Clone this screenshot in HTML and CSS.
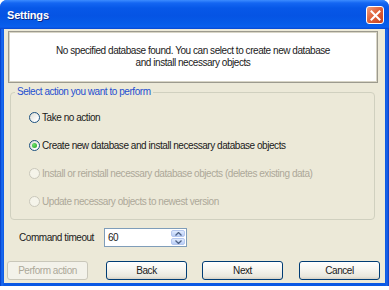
FILE: index.html
```html
<!DOCTYPE html>
<html>
<head>
<meta charset="utf-8">
<link rel="stylesheet" href="styles.css">
</head>
<body>
<div class="window">
  <div class="titlebar">
    <span class="title">Settings</span>
    <span class="close"><svg width="11" height="11" viewBox="0 0 11 11"><path d="M1.5 1.5 L9.5 9.5 M9.5 1.5 L1.5 9.5" stroke="#fff" stroke-width="2" stroke-linecap="square"/></svg></span>
  </div>
  <div class="client">
    <div class="info">
      <p>No specified database found. You can select to create new database<br>and install necessary objects</p>
    </div>
    <fieldset class="group">
      <legend>Select action you want to perform</legend>
      <div class="opt"><span class="radio"></span><span>Take no action</span></div>
      <div class="opt"><span class="radio checked"></span><span>Create new database and install necessary database objects</span></div>
      <div class="opt disabled"><span class="radio"></span><span>Install or reinstall necessary database objects (deletes existing data)</span></div>
      <div class="opt disabled"><span class="radio"></span><span>Update necessary objects to newest version</span></div>
    </fieldset>
    <div class="timeout">
      <span class="tlabel">Command timeout</span>
      <div class="spin">
        <span class="val">60</span>
        <div class="arrows">
          <span class="arr"><svg width="7" height="4" viewBox="0 0 7 4"><path d="M0.5 3.5 L3.5 0.5 L6.5 3.5" fill="none" stroke="#4d6185" stroke-width="1.3"/></svg></span>
          <span class="arr"><svg width="7" height="4" viewBox="0 0 7 4"><path d="M0.5 0.5 L3.5 3.5 L6.5 0.5" fill="none" stroke="#4d6185" stroke-width="1.3"/></svg></span>
        </div>
      </div>
    </div>
    <div class="buttons">
      <span class="btn disabled b1">Perform action</span>
      <span class="btn b2">Back</span>
      <span class="btn b3">Next</span>
      <span class="btn b4">Cancel</span>
    </div>
  </div>
</div>
<div class="under"></div>
</body>
</html>
```
FILE: styles.css
```css
html, body { margin: 0; padding: 0; background: #fff; }
body { width: 389px; height: 290px; overflow: hidden; font-family: "Liberation Sans", Arial, sans-serif; font-size: 10px; letter-spacing: -0.45px; color: #1a1a1a; }
.window {
  width: 389px; height: 286px; box-sizing: border-box;
  background: linear-gradient(90deg, #0831b8 0, #0a5ae6 1px, #1e6cf0 2px, #0a58e4 4px, #0a58e4 385px, #1a64ea 387px, #0a3cc4 389px);
  border-radius: 7px 7px 0 0;
  display: flex; flex-direction: column;
  padding: 0 4px 3px 4px;
}
.titlebar {
  height: 29px; margin: 0 -4px; padding: 0 5px 0 7px;
  display: flex; align-items: center; justify-content: space-between;
  background: linear-gradient(#3c8cff 0, #1466f2 3px, #0758e8 8px, #0554e4 16px, #065ce9 24px, #0a5fee 27px, #0646d0 29px);
  border-radius: 7px 7px 0 0;
}
.title { color: #fff; font-weight: bold; font-size: 11px; letter-spacing: -0.2px; text-shadow: 1px 1px 0 #0a2a8a; margin-top: 1px; }
.close {
  width: 16px; height: 16px; border: 1px solid #fff; border-radius: 3px;
  background: linear-gradient(135deg, #f0a080 0, #e0643c 45%, #c8401c 100%);
  display: flex; align-items: center; justify-content: center; margin-top: 1px;
}
.client { flex: 1; background: #ece9d8; display: flex; flex-direction: column; }
.info {
  margin: 2px 7px 0 4px; height: 52px; box-sizing: border-box;
  border: 1px solid #9c9a8e; box-shadow: inset 0 0 0 1px #d8d5c6;
  background: #fff; display: flex; align-items: center; justify-content: center;
}
.info p { margin: 0; text-align: center; line-height: 12px; }
.group {
  margin: 3px 10px 0 6px; padding: 5px 0 4px 18px; height: 134px; box-sizing: border-box;
  border: 1px solid #d0d0bf; border-radius: 4px;
}
.group legend { color: #1f4fd0; padding: 0 2px; margin-left: -14px; line-height: 12px; }
.opt { height: 28px; display: flex; align-items: center; gap: 2px; }
.opt.disabled { color: #aca899; }
.radio {
  width: 11px; height: 11px; border: 1px solid #1c5180; border-radius: 50%; box-sizing: border-box;
  background: linear-gradient(135deg, #dcdcd4 0, #fff 80%); display: flex; align-items: center; justify-content: center;
}
.opt.disabled .radio { border-color: #cac8bb; background: #f5f4ea; }
.radio.checked::after { content: ""; width: 5px; height: 5px; border-radius: 50%; background: radial-gradient(circle at 35% 35%, #6fe06f, #21a121); }
.timeout { margin: 8px 0 0 15px; height: 19px; display: flex; align-items: center; }
.tlabel { width: 85px; }
.spin {
  width: 83px; height: 19px; box-sizing: border-box; border: 1px solid #7f9db9; background: #fff;
  display: flex; align-items: center; justify-content: space-between; padding: 1px 1px 1px 3px;
}
.arrows { width: 14px; height: 15px; display: flex; flex-direction: column; gap: 1px; }
.arr {
  flex: 1; border-radius: 2px; border: 1px solid #b6c8ef; box-sizing: border-box;
  background: linear-gradient(#e0ebfd, #b8cdf7); display: flex; align-items: center; justify-content: center;
}
.buttons { margin: 14px 0 0 3px; height: 19px; display: flex; }
.btn {
  width: 81px; height: 19px; box-sizing: border-box; border: 1px solid #003c74; border-radius: 3px;
  background: linear-gradient(#fff 0, #f7f6f1 40%, #e9e7dd 85%, #d6d0c5 100%);
  display: flex; align-items: center; justify-content: center;
}
.btn.disabled { border-color: #c9c7ba; background: #f3f2ea; color: #aca899; }
.b2 { margin-left: 18px; }
.b3 { margin-left: 15px; }
.b4 { margin-left: 16px; }
.under { height: 4px; background: #fff; }
```
